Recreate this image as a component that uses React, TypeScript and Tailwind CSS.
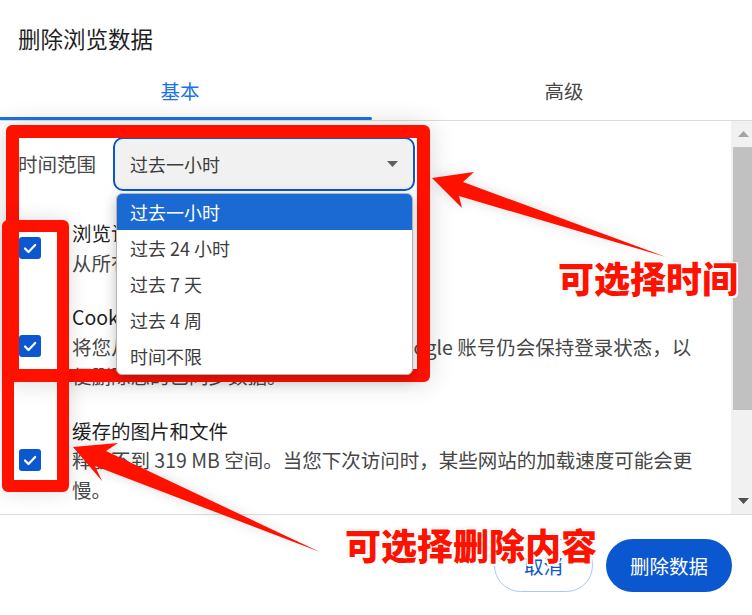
import React from "react";

function Check() {
  return (
    <div className="w-[22px] h-[22px] rounded-[3px] bg-[#0b57d0] flex items-center justify-center shrink-0">
      <svg width="22" height="22" viewBox="0 0 22 22">
        <path d="M6 11.5 L9.5 15 L16.2 8" fill="none" stroke="#ffffff" strokeWidth="2.2" strokeLinecap="round" strokeLinejoin="round" />
      </svg>
    </div>
  );
}

export default function App() {
  const items = ["过去一小时", "过去 24 小时", "过去 7 天", "过去 4 周", "时间不限"];
  return (
    <div className="relative w-[752px] h-[615px] overflow-hidden bg-white font-['Noto_Sans_CJK_SC','Noto_Sans',sans-serif]">
      {/* title */}
      <div className="h-[62px] pl-[18px] pt-[25px] text-[22.5px] leading-[26px] text-[#1f1f1f]">删除浏览数据</div>

      {/* tabs */}
      <div className="flex h-[59px] border-b border-[#dcdcdc]">
        <div className="w-[372px] flex flex-col">
          <div className="flex-1 flex items-center justify-center pr-[12px] pt-[3px] text-[19.5px] text-[#1a73e8]">基本</div>
          <div className="h-[3px] bg-[#1a73e8] rounded-r-[3px]" />
        </div>
        <div className="flex-1 flex items-center justify-center pl-[4px] text-[19.5px] text-[#474747]">高级</div>
      </div>

      {/* content */}
      <div className="flex h-[394px] border-b border-[#dadce0]">
        <div className="flex-1 overflow-visible">
          <div className="flex items-center pt-[16px] pl-[18px]">
            <div className="w-[95px] text-[19.5px] leading-[26px] text-[#474747]">时间范围</div>
            <div className="relative w-[302px] h-[54px] border-2 border-[#0b57d0] rounded-[10px] bg-[#f1f1f1] flex items-center pl-[15px] pr-[15px] text-[18px] text-[#3c3c3c]">
              <span>过去一小时</span>
              <svg className="ml-auto" width="11" height="6" viewBox="0 0 11 6">
                <path d="M0 0 L11 0 L5.5 6 Z" fill="#5f5f5f" />
              </svg>
              <div className="absolute z-10 top-[54px] left-[1px] w-[297px] bg-white border border-[#b4b4b4] rounded-[6px] overflow-hidden shadow-[0_4px_14px_rgba(0,0,0,0.25)]">
                {items.map((t, i) => (
                  <div
                    key={t}
                    className={
                      i === 0
                        ? "h-[36px] flex items-center pl-[13px] text-[18px] bg-[#1b6ad3] text-white"
                        : "h-[36px] flex items-center pl-[13px] text-[18px] text-[#3c3c3c]"
                    }
                  >
                    {t}
                  </div>
                ))}
              </div>
            </div>
          </div>

          <div className="mt-[27px] flex flex-col gap-[25px] text-[19.5px] leading-[29.5px]">
            <div className="flex items-center pl-[19px]">
              <Check />
              <div className="ml-[31px] whitespace-nowrap">
                <div className="text-[#1f1f1f]">浏览记录</div>
                <div className="text-[#474747]">从所有已同步的设备中清除历史记录</div>
              </div>
            </div>
            <div className="flex items-center pl-[19px]">
              <Check />
              <div className="ml-[31px] whitespace-nowrap">
                <div className="text-[#1f1f1f]">Cookie 及其他网站数据</div>
                <div className="text-[#474747]">将您从大多数网站中退出登录。您的 Google 账号仍会保持登录状态，以</div>
                <div className="text-[#474747]">便删除您的已同步数据。</div>
              </div>
            </div>
            <div className="flex items-center pl-[19px]">
              <Check />
              <div className="ml-[31px] whitespace-nowrap">
                <div className="text-[#1f1f1f]">缓存的图片和文件</div>
                <div className="text-[#474747]">释放不到 319 MB 空间。当您下次访问时，某些网站的加载速度可能会更</div>
                <div className="text-[#474747]">慢。</div>
              </div>
            </div>
          </div>
        </div>

        {/* scrollbar */}
        <div className="w-[21px] bg-[#f1f1f1] flex flex-col">
          <div className="h-[26px] flex items-center justify-center pl-[3px]">
            <svg width="11" height="6" viewBox="0 0 11 6">
              <path d="M0 6 L11 6 L5.5 0 Z" fill="#a3a3a3" />
            </svg>
          </div>
          <div className="h-[263px] ml-[2px] bg-[#c1c1c1]" />
          <div className="flex-1" />
          <div className="h-[26px] flex items-center justify-center pl-[3px]">
            <svg width="11" height="6" viewBox="0 0 11 6">
              <path d="M0 0 L11 0 L5.5 6 Z" fill="#505050" />
            </svg>
          </div>
        </div>
      </div>

      {/* footer */}
      <div className="flex justify-end gap-[13px] pt-[24px] pr-[20px]">
        <div className="w-[99px] h-[53px] rounded-full border border-[#a8c7fa] flex items-center justify-center text-[19.5px] text-[#0b57d0]">取消</div>
        <div className="w-[126px] h-[53px] rounded-full bg-[#0b57d0] flex items-center justify-center text-[19.5px] text-white">删除数据</div>
      </div>

      {/* annotations */}
      <div className="absolute left-[6px] top-[125px] w-[424px] h-[257px] border-[13px] border-[#ff1100] rounded-[6px] shadow-[0_0_26px_rgba(0,0,0,0.16)]" />
      <div className="absolute left-[2px] top-[220px] w-[67px] h-[272px] border-[12px] border-[#ff1100] rounded-[6px] shadow-[0_0_20px_rgba(0,0,0,0.14)]" />
      <svg className="absolute left-0 top-0 drop-shadow-[0_0_6px_rgba(0,0,0,0.15)]" width="752" height="615" viewBox="0 0 752 615">
        <polygon points="432,178 474,172 463,182 666,257 459,196 462,208" fill="#ff1100" />
        <polygon points="73,447 118,443 106,451 320,552 95,466 102,481" fill="#ff1100" />
      </svg>
      <div className="absolute left-[558px] top-[259px] text-[36px] leading-[36px] font-black text-[#ff1100] whitespace-nowrap [text-shadow:1.5px_1.5px_0_#fff,-1.5px_-1.5px_0_#fff,1.5px_-1.5px_0_#fff,-1.5px_1.5px_0_#fff,0_0_4px_rgba(0,0,0,0.2)]">可选择时间</div>
      <div className="absolute left-[345px] top-[526px] text-[36px] leading-[36px] font-black text-[#ff1100] whitespace-nowrap [text-shadow:1.5px_1.5px_0_#fff,-1.5px_-1.5px_0_#fff,1.5px_-1.5px_0_#fff,-1.5px_1.5px_0_#fff,0_0_4px_rgba(0,0,0,0.2)]">可选择删除内容</div>
    </div>
  );
}
